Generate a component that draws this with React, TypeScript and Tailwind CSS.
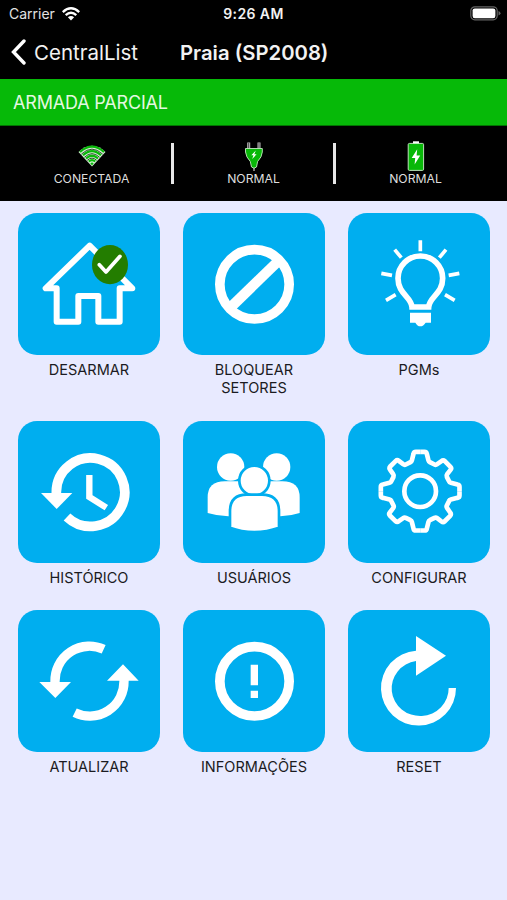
import React, { FC, ReactNode } from "react";

interface MenuItem {
  label: string;
  icon: ReactNode;
}

interface StatusItem {
  label: string;
  icon: ReactNode;
}

const gearQuarter =
  "M0 -118H13Q19 -118 20 -112L25 -92Q26 -88 29 -87L43 -80Q47 -78 51 -81L64 -90Q69 -94 74 -90L91 -73Q95 -69 91 -64L81 -51Q78 -47 80 -43L87 -29Q88 -26 92 -25L112 -20Q118 -19 118 -13V0";

// tile icons share one coordinate system, 426 units per tile
const HomeIcon = () => (
  <>
    <path
      d="M239 123L107 251H140V351H205V274H265V351H329V251H367Z"
      fill="none"
      stroke="white"
      strokeWidth="18"
      strokeLinejoin="round"
    />
    <ellipse cx="300" cy="180" rx="54" ry="59" fill="#237d00" />
    <path
      d="M268 180L288 202L330 155"
      fill="none"
      stroke="white"
      strokeWidth="11"
      strokeLinecap="round"
      strokeLinejoin="round"
    />
  </>
);

const BlockIcon = () => (
  <g fill="none" stroke="white">
    <circle cx="238.500" cy="239" r="104" strokeWidth="29" />
    <path d="M168 307L309 170" strokeWidth="31" />
  </g>
);

const BulbIcon = () => (
  <>
    <path
      d="M216 307C214 276 174 268 174 221A67 67 0 0 1 308 221C308 268 268 276 266 307Z"
      fill="none"
      stroke="white"
      strokeWidth="17"
    />
    <path d="M210 324H273V354H257Q250 365 241 365Q232 365 226 354H210Z" fill="white" />
    <path
      d="M241 107V140M164 135L184 159M318 135L298 159M124 206L156 212M358 206L326 212M138 287L167 270M344 287L315 270"
      stroke="white"
      strokeWidth="11"
    />
  </>
);

const HistoryIcon = () => (
  <>
    <path
      d="M139 243V239A102.500 102.500 0 1 1 171 313"
      fill="none"
      stroke="white"
      strokeWidth="29"
    />
    <path d="M93 241H187L140 289Z" fill="white" />
    <path d="M238 187V253L289 285" fill="none" stroke="white" strokeWidth="19" />
  </>
);

const UsersIcon = () => (
  <>
    <g fill="white">
      <circle cx="167" cy="163" r="41" />
      <circle cx="305" cy="163" r="41" />
      <path d="M98 301V254Q98 206 150 206H188Q230 208 230 254V311H160Q128 310 98 301Z" />
      <path d="M374 301V254Q374 206 322 206H288Q246 208 246 254V311H316Q346 310 374 301Z" />
    </g>
    <g fill="white" stroke="#00aeef" strokeWidth="8">
      <circle cx="238" cy="204" r="45" />
      <path d="M165 345V296Q165 246 215 246H261Q312 246 312 296V345Q276 358 238 358Q199 358 165 345Z" />
    </g>
  </>
);

const GearIcon = () => (
  <g
    transform="translate(240.500 235.500)"
    fill="none"
    stroke="white"
    strokeWidth="14"
    strokeLinejoin="round"
  >
    {[0, 90, 180, 270].map((angle) => (
      <path key={angle} d={gearQuarter} transform={`rotate(${angle})`} />
    ))}
    <circle r="47.500" />
  </g>
);

const RefreshIcon = () => (
  <>
    <path
      d="M135 243V239A103 103 0 0 1 281 143M342 235V239A103 103 0 0 1 194 333"
      fill="none"
      stroke="white"
      strokeWidth="28"
    />
    <path d="M88 241H183L136 289ZM291 237H386L339 188Z" fill="white" />
  </>
);

const InfoIcon = () => (
  <>
    <circle cx="238.500" cy="239" r="104" fill="none" stroke="white" strokeWidth="29" />
    <path d="M227 189H249V251H227ZM227 267H249V289H227Z" fill="white" />
  </>
);

const ResetIcon = () => (
  <path
    d="M228 147A112.500 112.500 0 1 0 348 259H326A85.500 83 0 1 1 228 178V222L318 162L228 103Z"
    fill="white"
  />
);

const WifiStatusIcon = () => (
  <svg viewBox="0 0 28 22" className="mt-1 h-[22px] w-7">
    <path d="M0.500 7Q14 -5.500 27.500 7L14 21.500Z" fill="#d6f0d4" />
    <g fill="none" stroke="#08b808" strokeWidth="2.200">
      <path d="M2 7Q14 -3.600 26 7" />
      <path d="M5 10.300Q14 2 23 10.300" />
      <path d="M8 13.500Q14 8 20 13.500" />
      <path d="M10.800 16.500Q14 13.700 17.200 16.500" />
    </g>
    <g fill="none" stroke="#072807" strokeWidth="0.800">
      <path d="M3.400 9.100Q14 -0.800 24.600 9.100" />
      <path d="M6.400 12.300Q14 5 21.600 12.300" />
      <path d="M9.300 15.300Q14 11 18.700 15.300" />
    </g>
    <path d="M12.300 18.200Q14 16.900 15.700 18.200L14 20.500Z" fill="#08b808" />
  </svg>
);

const PlugStatusIcon = () => (
  <svg viewBox="0 0 20 30" className="h-[30px] w-5">
    <path d="M4.700 8V1.500M15 8V1.500" stroke="#bdbdbd" strokeWidth="3" />
    <path d="M4.700 8V2M15 8V2" stroke="#444444" strokeWidth="1" />
    <path
      d="M1.500 7.500H18.300V11Q18 16 13.600 20.500L12.500 26Q10 28.500 7.500 26L6.300 20.500Q2 16 1.500 11Z"
      fill="#08b808"
      stroke="#c5e8c2"
      strokeWidth="0.900"
    />
    <path d="M10 27V30" stroke="#bdbdbd" strokeWidth="1.300" />
    <path d="M11.800 9.500L7.300 14.200H9.500L8.200 18L12.600 13.300H10.300Z" fill="white" />
  </svg>
);

const BatteryStatusIcon = () => (
  <svg viewBox="0 0 18 30" className="h-[30px] w-[18px]">
    <path d="M6 0.300H12V3H6Z" fill="white" />
    <rect
      x="1.200"
      y="2.400"
      width="15.400"
      height="27"
      rx="1.200"
      fill="#08b808"
      stroke="#cfeccd"
      strokeWidth="0.900"
    />
    <path d="M10.200 8.300L4.700 17H8.200L7.600 23.500L13.200 14.600H9.600Z" fill="white" />
  </svg>
);

const menuItems: MenuItem[] = [
  { label: "DESARMAR", icon: <HomeIcon /> },
  { label: "BLOQUEAR SETORES", icon: <BlockIcon /> },
  { label: "PGMs", icon: <BulbIcon /> },
  { label: "HISTÓRICO", icon: <HistoryIcon /> },
  { label: "USUÁRIOS", icon: <UsersIcon /> },
  { label: "CONFIGURAR", icon: <GearIcon /> },
  { label: "ATUALIZAR", icon: <RefreshIcon /> },
  { label: "INFORMAÇÕES", icon: <InfoIcon /> },
  { label: "RESET", icon: <ResetIcon /> },
];

const statusItems: StatusItem[] = [
  { label: "CONECTADA", icon: <WifiStatusIcon /> },
  { label: "NORMAL", icon: <PlugStatusIcon /> },
  { label: "NORMAL", icon: <BatteryStatusIcon /> },
];

const StatusBar: FC = () => (
  <div className="grid h-[27px] grid-cols-3 items-center px-[7px]">
    <div className="flex items-center gap-[7px] pl-0.5 text-sm text-[#e2e2e2]">
      <span>Carrier</span>
      <svg viewBox="0 0 18 14" className="h-3.5 w-[18px]">
        <g fill="none" stroke="white" strokeWidth="2.400">
          <path d="M0.800 5.100Q9 -2.400 17.200 5.100" />
          <path d="M3.700 8.200Q9 3.400 14.300 8.200" />
        </g>
        <path d="M5.900 10.200Q9 7.900 12.100 10.200L9 13.500Z" fill="white" />
      </svg>
    </div>
    <div className="text-center text-sm font-semibold tracking-[0.4px] text-[#f2f2f2]">
      9:26 AM
    </div>
    <svg viewBox="0 0 31 15" className="-mr-px h-[15px] w-[31px] justify-self-end">
      <rect x="0.800" y="0.800" width="26.400" height="13" rx="4" fill="black" stroke="#646464" strokeWidth="1.200" />
      <rect x="2.600" y="2.400" width="22.800" height="9.800" rx="2.200" fill="white" />
      <path d="M28.500 5Q30.500 6 30.500 7.300Q30.500 8.600 28.500 9.600Z" fill="#646464" />
    </svg>
  </div>
);

const NavBar: FC = () => (
  <div className="grid h-[52px] grid-cols-[169px_1fr] items-center pl-[11px] text-[#f2f2f2]">
    <button className="flex items-center gap-[7px] text-[20.5px]">
      <svg viewBox="0 0 16 26" className="-mt-0.5 h-[26px] w-4">
        <path d="M13 2L2.500 13L13 24" fill="none" stroke="white" strokeWidth="3.400" strokeLinecap="round" />
      </svg>
      <span>CentralList</span>
    </button>
    <h1 className="text-[20.3px] font-semibold">Praia (SP2008)</h1>
  </div>
);

const App: FC = () => {
  return (
    <div className="flex h-screen w-full flex-col overflow-hidden bg-[#e8eaff] font-['Inter',sans-serif]">
      <header className="bg-black">
        <StatusBar />
        <NavBar />
      </header>
      <div className="flex h-[47px] items-center border-b border-[#027402] bg-[#06b908] pt-0.5 pl-[13px] text-lg tracking-[-0.18px] text-[#e3f8e0]">
        ARMADA PARCIAL
      </div>
      <div className="flex h-[75px] bg-black px-3 pt-[15px]">
        {statusItems.map((item, index) => (
          <React.Fragment key={index}>
            {index > 0 && <div className="mt-0.5 h-[41px] w-[3px] bg-[#e8e8e8]" />}
            <div className="flex flex-1 flex-col items-center">
              <div className="h-[30px]">{item.icon}</div>
              <span className="text-[12.2px] leading-4 text-[#dedede]">{item.label}</span>
            </div>
          </React.Fragment>
        ))}
      </div>
      <main className="grid grid-cols-[142px_142px_142px] gap-x-[23px] gap-y-[24.3px] pt-[12.300px] pl-[18px]">
        {menuItems.map((item) => (
          <button key={item.label} className="flex flex-col items-center">
            <div className="size-[142px] rounded-[19px] bg-[#00aeef]">
              <svg viewBox="24 25 426 426" className="size-full">
                {item.icon}
              </svg>
            </div>
            <span className="mt-1.5 w-[110px] text-center text-[14.5px] leading-[17.5px] text-[#1b1b22]">
              {item.label}
            </span>
          </button>
        ))}
      </main>
    </div>
  );
};

export default App;
